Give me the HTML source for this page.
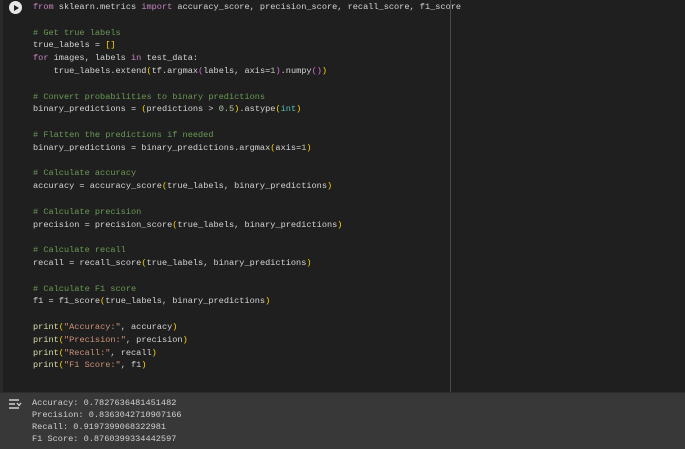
<!DOCTYPE html>
<html><head><meta charset="utf-8"><style>
html,body{margin:0;padding:0;width:685px;height:448px;overflow:hidden;background:#1f1f1f;font-family:"Liberation Mono",monospace;}
#code{position:absolute;left:0;top:0;width:685px;height:392px;background:#1f1f1f;border-left:3px solid #2a2a2a;box-sizing:border-box}
#vl{position:absolute;left:450px;top:0;width:1px;height:394px;background:#4a4a4a}
pre{margin:0;position:absolute;left:30px;top:1px;font-size:8.6px;line-height:12.8px;color:#d4d4d4;font-family:"Liberation Mono",monospace}
.k{color:#c586c0}.c{color:#6a9955}.y{color:#ffd700}.p{color:#da70d6}.n{color:#b5cea8}.s{color:#ce9178}.f{color:#dcdcaa}.t{color:#4ec9b0}
#run{position:absolute;left:6px;top:1px;width:13px;height:13px;border-radius:50%;background:#e8e8e8}
#run:after{content:"";position:absolute;left:5px;top:3.5px;border-left:5px solid #1f1f1f;border-top:3px solid transparent;border-bottom:3px solid transparent}
#out{position:absolute;left:0;top:392px;width:685px;height:56px;background:#383838;border-top:1px solid #2c2c2c}
#out pre{left:32px;top:4px;line-height:12px;font-size:8.6px;color:#d0d0d0}
</style></head><body>
<div id="code">
<div id="run"></div>
<pre><span class="k">from</span> sklearn.metrics <span class="k">import</span> accuracy_score, precision_score, recall_score, f1_score

<span class="c"># Get true labels</span>
true_labels = <span class="y">[]</span>
<span class="k">for</span> images, labels <span class="k">in</span> test_data:
    true_labels.extend<span class="y">(</span>tf.argmax<span class="p">(</span>labels, axis=<span class="n">1</span><span class="p">)</span>.numpy<span class="p">()</span><span class="y">)</span>

<span class="c"># Convert probabilities to binary predictions</span>
binary_predictions = <span class="y">(</span>predictions &gt; <span class="n">0.5</span><span class="y">)</span>.astype<span class="y">(</span><span class="t">int</span><span class="y">)</span>

<span class="c"># Flatten the predictions if needed</span>
binary_predictions = binary_predictions.argmax<span class="y">(</span>axis=<span class="n">1</span><span class="y">)</span>

<span class="c"># Calculate accuracy</span>
accuracy = accuracy_score<span class="y">(</span>true_labels, binary_predictions<span class="y">)</span>

<span class="c"># Calculate precision</span>
precision = precision_score<span class="y">(</span>true_labels, binary_predictions<span class="y">)</span>

<span class="c"># Calculate recall</span>
recall = recall_score<span class="y">(</span>true_labels, binary_predictions<span class="y">)</span>

<span class="c"># Calculate F1 score</span>
f1 = f1_score<span class="y">(</span>true_labels, binary_predictions<span class="y">)</span>

<span class="f">print</span><span class="y">(</span><span class="s">"Accuracy:"</span>, accuracy<span class="y">)</span>
<span class="f">print</span><span class="y">(</span><span class="s">"Precision:"</span>, precision<span class="y">)</span>
<span class="f">print</span><span class="y">(</span><span class="s">"Recall:"</span>, recall<span class="y">)</span>
<span class="f">print</span><span class="y">(</span><span class="s">"F1 Score:"</span>, f1<span class="y">)</span></pre>
</div>
<div id="vl"></div>
<div id="out">
<svg style="position:absolute;left:8px;top:5px" width="14" height="12" viewBox="0 0 14 12"><path d="M1 2H11M1 6H7M1 10H11" stroke="#d0d0d0" stroke-width="1.4" fill="none"/><path d="M9 5L11 7.5L13 5" stroke="#d0d0d0" stroke-width="1.3" fill="none"/></svg>
<pre>Accuracy: 0.7827636481451482
Precision: 0.8363042710907166
Recall: 0.9197399068322981
F1 Score: 0.8760399334442597</pre>
</div>
</body></html>
